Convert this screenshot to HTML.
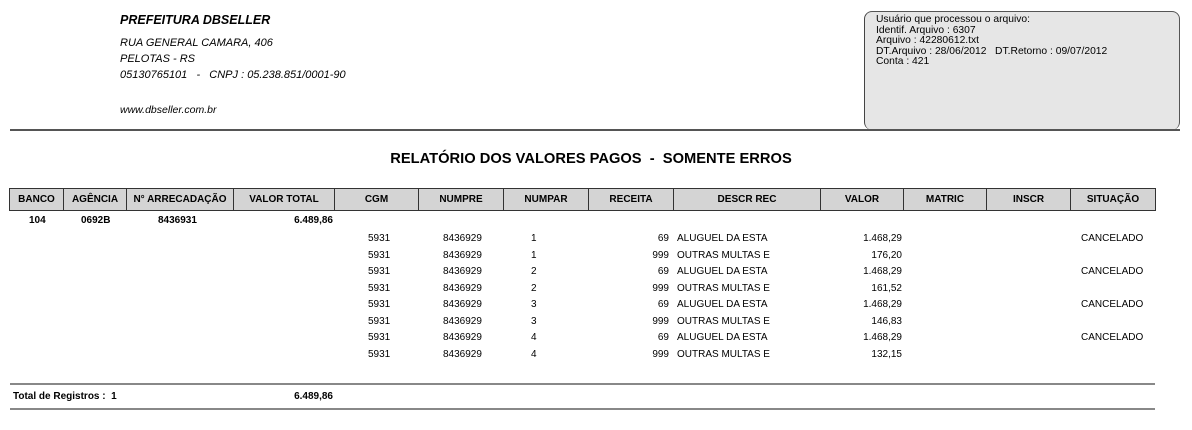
<!DOCTYPE html>
<html><head><meta charset="utf-8"><style>
*{margin:0;padding:0;box-sizing:border-box}
body{width:1192px;height:430px;background:#fff;position:relative;font-family:"Liberation Sans",sans-serif;color:#000;overflow:hidden}
.a{position:absolute;white-space:nowrap}
.hd{font-style:italic;font-size:11px}
.box{position:absolute;left:864px;top:11px;width:316px;height:119px;background:#e6e6e6;border:1px solid #555;border-radius:8px;border-bottom:none;border-left:1.5px solid #444}
.box div{font-size:10.3px;line-height:10.5px}
.th{position:absolute;top:188px;height:23px;background:#d4d4d4;border:1px solid #333;font-weight:bold;font-size:10px;text-align:center;line-height:21px}
.d{position:absolute;font-size:10px;white-space:nowrap}
.r{text-align:right}
.hl{position:absolute;height:2px;background:#888}
</style></head><body>
<div class="a" style="left:120px;top:13px;font-weight:bold;font-style:italic;font-size:12.5px">PREFEITURA DBSELLER</div>
<div class="a hd" style="left:120px;top:37px">RUA GENERAL CAMARA, 406</div>
<div class="a hd" style="left:120px;top:53px">PELOTAS - RS</div>
<div class="a hd" style="left:120px;top:69px">05130765101 &nbsp; - &nbsp; CNPJ : 05.238.851/0001-90</div>
<div class="a hd" style="left:120px;top:104px;font-size:10.5px">www.dbseller.com.br</div>
<div class="box"><div style="position:absolute;left:11px;top:3px">Usuário que processou o arquivo:<br>Identif. Arquivo : 6307<br>Arquivo : 42280612.txt<br>DT.Arquivo : 28/06/2012 &nbsp; DT.Retorno : 09/07/2012<br>Conta : 421</div></div>
<div class="a" style="left:10px;top:129px;width:1170px;height:1.5px;background:#555"></div>
<div class="a" style="left:-5px;width:1192px;top:151px;text-align:center;font-weight:bold;font-size:14.7px">RELATÓRIO DOS VALORES PAGOS &nbsp;- &nbsp;SOMENTE ERROS</div>

<div class="th" style="left:9px;width:55px">BANCO</div>
<div class="th" style="left:63px;width:64px">AGÊNCIA</div>
<div class="th" style="left:126px;width:108px">N° ARRECADAÇÃO</div>
<div class="th" style="left:233px;width:102px">VALOR TOTAL</div>
<div class="th" style="left:334px;width:85px">CGM</div>
<div class="th" style="left:418px;width:86px">NUMPRE</div>
<div class="th" style="left:503px;width:86px">NUMPAR</div>
<div class="th" style="left:588px;width:86px">RECEITA</div>
<div class="th" style="left:673px;width:148px">DESCR REC</div>
<div class="th" style="left:820px;width:84px">VALOR</div>
<div class="th" style="left:903px;width:84px">MATRIC</div>
<div class="th" style="left:986px;width:85px">INSCR</div>
<div class="th" style="left:1070px;width:86px">SITUAÇÃO</div>

<div class="d" style="left:29px;top:215px;font-weight:bold">104</div>
<div class="d" style="left:81px;top:215px;font-weight:bold">0692B</div>
<div class="d" style="left:158px;top:215px;font-weight:bold">8436931</div>
<div class="d r" style="left:233px;width:100px;top:215px;font-weight:bold">6.489,86</div>

<div id="rows"></div>
<script>
var data=[["1","69","ALUGUEL DA ESTA","1.468,29","CANCELADO"],["1","999","OUTRAS MULTAS E","176,20",""],["2","69","ALUGUEL DA ESTA","1.468,29","CANCELADO"],["2","999","OUTRAS MULTAS E","161,52",""],["3","69","ALUGUEL DA ESTA","1.468,29","CANCELADO"],["3","999","OUTRAS MULTAS E","146,83",""],["4","69","ALUGUEL DA ESTA","1.468,29","CANCELADO"],["4","999","OUTRAS MULTAS E","132,15",""]];
var h="";data.forEach(function(r,i){var y=233+i*16.5;
h+='<div class="d" style="left:368px;top:'+y+'px">5931</div><div class="d" style="left:443px;top:'+y+'px">8436929</div><div class="d" style="left:531px;top:'+y+'px">'+r[0]+'</div><div class="d r" style="left:600px;width:69px;top:'+y+'px">'+r[1]+'</div><div class="d" style="left:677px;top:'+y+'px">'+r[2]+'</div><div class="d r" style="left:820px;width:82px;top:'+y+'px">'+r[3]+'</div><div class="d" style="left:1081px;top:'+y+'px">'+r[4]+'</div>';});
document.getElementById("rows").innerHTML=h;
</script>
<div class="hl" style="left:10px;top:383px;width:1145px"></div>
<div class="d" style="left:13px;top:391px;font-weight:bold">Total de Registros : &nbsp;1</div>
<div class="d r" style="left:233px;width:100px;top:391px;font-weight:bold">6.489,86</div>
<div class="hl" style="left:10px;top:408px;width:1145px"></div>
</body></html>
